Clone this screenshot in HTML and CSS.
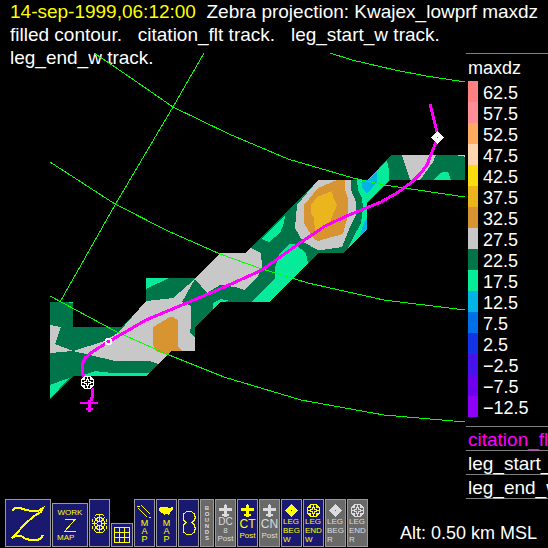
FILE: index.html
```
<!DOCTYPE html>
<html lang="en">
<head>
<meta charset="utf-8">
<meta name="viewport" content="width=device-width,initial-scale=1.0">
<title>Zebra - Kwajex_lowprf maxdz</title>
<link rel="stylesheet" href="styles.css">
</head>
<body>
<!-- shared icon shapes -->
<svg class="defs" aria-hidden="true">
    <symbol id="plane" viewBox="0 0 13 13"><path fill="currentColor" d="M5 1h1V0h1v1h1v3h5v3H8v3h2v2H8v1H5v-1H3v-2h2V7H0V4h5z"/></symbol>
    <symbol id="diamond" viewBox="0 0 13 13"><path fill="currentColor" fill-rule="evenodd" d="M6 0h1v1h1v1h1v1h1v1h1v1h1v1h1v1h-1v1h-1v1h-1v1H9v1H8v1H7v1H6v-1H5v-1H4v-1H3V9H2V8H1V7H0V6h1V5h1V4h1V3h1V2h1V1h1zM6 6v1h1V6z"/></symbol>
    <symbol id="wheel" viewBox="0 0 13 13"><path fill="none" stroke="currentColor" d="M3 .5h7M2 1.500h2M6 1.500h1M9 1.500h2M1 2.500h3M6 2.500h1M9 2.500h3M0 3.500h4M5 3.500h3M9 3.500h4M0 4.500h1M5 4.500h1M7 4.500h1M12 4.500h1M0 5.500h1M3 5.500h3M7 5.500h3M12 5.500h1M0 6.500h4M9 6.500h4M0 7.500h1M3 7.500h3M7 7.500h3M12 7.500h1M0 8.500h1M5 8.500h1M7 8.500h1M12 8.500h1M0 9.500h4M5 9.500h3M9 9.500h4M1 10.500h3M6 10.500h1M9 10.500h3M2 11.500h2M6 11.500h1M9 11.500h2M3 12.500h7"/></symbol>
</svg>

<header class="title">
    <time class="date">14-sep-1999,06:12:00</time>&nbsp; Zebra projection: Kwajex_lowprf maxdz filled contour.&nbsp;&nbsp; citation_flt track.&nbsp;&nbsp; leg_start_w track.&nbsp;&nbsp; leg_end_w track.
</header>

<main class="display">
    <svg class="map" viewBox="0 53 466 373" role="img" aria-label="maxdz filled contour with citation_flt track">
        <g shape-rendering="crispEdges">
            <!-- 22.5 -->
            <path fill="#00754a" d="M50 302H73V327H122L146 302V278H195L220 253H245L318 180H368L391 155H465V180H390L367 203V229L343 253H318L270 302H221L195 327V351H171L147 376H73L50 399z"/>
            <!-- 17.5 -->
            <g fill="#05eb99">
                <path d="M357 180H368L387 160 389 170V180L367 203V229L348 248 353 238 361 223 363 208 362 198 358 190z"/>
                <path d="M434 180L438 175 443 172H448L451 180z"/>
                <path d="M262 238L285 215 284 223 280 233 269 242 262 239z"/>
                <path d="M252 302L275 278V267L280 253 290 244H295L306 253 308 263 270 302z"/>
                <path d="M213 309V303L221 299 230 301 221 302z"/>
                <path d="M146 278H169L146 289zM50 385L69 378 50 399z"/>
                <path d="M81 376L95 371 112 373H149L147 376zM69 302H73V303H69z"/>
            </g>
            <!-- 12.5 -->
            <path fill="#00b4e6" d="M362 180H368L377 172V182L367 194 362 187zM367 218V229L360 236 363 225z"/>
            <!-- 27.5 -->
            <g fill="#c8c8c8">
                <path d="M50 325L61 327 55 344 73 351 102 342 118 333 146 301 173 298 195 279 182 302 191 306V325L190 333 195 338V351H171L158 364 149 361H115L90 355 73 351 50 353z"/>
                <path d="M195 279L220 253H245L251 248 261 253 262 267 257 278 244 290 235 287 220 285 207 293z"/>
                <path d="M318 180H351V190L356 202V215L350 227 342 247 322 250H318L303 242 295 228 297 205z"/>
                <path d="M402 155H436L433 162 420 180H410zM458 155H465V157H464V156H458z"/>
            </g>
            <!-- 32.5 and 37.5 -->
            <path fill="#d79430" d="M318 188L337 180H345V190L348 198V215L343 234 318 241 313 238 304 223V205zM153 327L170 317H173L178 320V347L182 351H171L167 355 156 351 153 345z"/>
            <path fill="#ebb51e" d="M332 191L333 197 337 205 330 222 325 229 315 232 314 218 311 213V205L317 197z"/>
        </g>

        <g class="grid-lines">
            <path d="M330 53L352 60 395 70 426 76 465 82"/>
            <path d="M94 53L115 67 173 107 229 134 288 159 353 178 384 185 465 197"/>
            <path d="M50 162L115 204 168 231 220 254 259 268 308 283 384 300 465 310"/>
            <path d="M50 296L115 331 164 353 224 377 301 400 384 415 465 422"/>
            <path d="M204 53L173 107 115 205 60 302"/>
        </g>

        <path class="track" d="M430 104L434 120 437 132V140L432 152 427 165 420 174 412 182 397 193 381 202 349 215 325 226 297 245 262 270 220 289 182 305 146 320 108 342 92 352 85 358 82 365 82 373 87 382 92 388 93 394 91 401"/>
        <g shape-rendering="crispEdges">
            <path fill="#f0f" d="M80 402h8v-2h3v2h7v2h-7v4h2v2h-2v2h-3v-2h-2v-2h2v-4h-8z"/>
            <circle class="marker" cx="108.500" cy="341.500" r="3"/>
        </g>
        <g color="#fff" shape-rendering="crispEdges">
            <use href="#diamond" x="431" y="131" width="13" height="13"/>
            <path d="M84 376h7l3 3v7l-3 3h-7l-3-3v-7z"/>
            <use href="#wheel" x="81" y="376" width="13" height="13"/>
        </g>
        <path fill="#f0f" d="M437 137h1v1h-1z"/>
    </svg>

    <aside class="side">
        <section class="legend">
            <h2>maxdz</h2>
            <ul>
                <li class="c1">62.5</li>
                <li class="c2">57.5</li>
                <li class="c3">52.5</li>
                <li class="c4">47.5</li>
                <li class="c5">42.5</li>
                <li class="c6">37.5</li>
                <li class="c7">32.5</li>
                <li class="c8">27.5</li>
                <li class="c9">22.5</li>
                <li class="c10">17.5</li>
                <li class="c11">12.5</li>
                <li class="c12">7.5</li>
                <li class="c13">2.5</li>
                <li class="c14">−2.5</li>
                <li class="c15">−7.5</li>
                <li class="c16">−12.5</li>
            </ul>
        </section>
        <ul class="tracks">
            <li class="on">citation_flt</li>
            <li>leg_start_w</li>
            <li>leg_end_w</li>
        </ul>
    </aside>
</main>

<footer class="bottom">
    <nav class="toolbar" aria-label="Icons">
        <button class="btn zebra" type="button" aria-label="Zebra">
            <svg width="44" height="46" viewBox="1 1 44 46"><path class="line thick" d="M7 12L10 9H15L21 11 27 12H33L38 9 36 13 29 17 19 26 12 34 7 39 11 37H16L21 40 26 41H33L36 39 38 36"/></svg>
        </button>
        <button class="btn work" type="button">
            <span>WORK</span>
            <svg width="12" height="13" viewBox="0 0 12 13"><path class="line" d="M1 .5h10L.5 12.500h11"/></svg>
            <span class="start">MAP</span>
        </button>
        <button class="btn mid" type="button" aria-label="Radar">
            <svg width="15" height="19" viewBox="0 0 15 19"><g class="line"><path d="M4.500.5h6M2.500 2.500l2-2M12.500 2.500l-2-2M.5 4.500v3M14.500 4.500v3M.5 11.500v3M14.500 11.500v3M2.500 16.500l2 2h6l2-2"/><ellipse cx="7.500" cy="9.500" rx="5" ry="6"/><circle cx="7.500" cy="9.500" r="2.500"/><path d="M7.500 1v6M7.500 12v6M0 9.500h5M10 9.500h5M2 3l4 4.500M13 3L9 7.500M2 16l4-4.500M13 16l-4-4.500"/></g></svg>
        </button>
        <button class="btn small" type="button" aria-label="Grid">
            <svg width="16" height="16" viewBox="0 0 16 16"><path class="line" d="M.5.5h15v15H.5zM5.500 0v16M10.500 0v16M0 5.500h16M0 10.500h16"/></svg>
        </button>
        <button class="btn" type="button">
            <svg width="15" height="15" viewBox="0 0 15 15"><path class="line" stroke-dasharray="5 1" d="M4 1l9 9M1 4l9 9"/><path class="line" d="M0 2h3M12 13h2"/></svg>
            <span class="stack">M<br>A<br>P</span>
        </button>
        <button class="btn" type="button">
            <svg width="15" height="15" viewBox="0 0 15 15"><path fill="currentColor" d="M1 3h7l1 1h2l2-1h1v2l-2 2-1 2-1 1v1H9v-1H6l-1 1-2-2-2-1-1-3z"/></svg>
            <span class="stack">M<br>A<br>P</span>
        </button>
        <button class="btn mid" type="button" aria-label="Outline">
            <svg width="14" height="24" viewBox="0 0 14 24"><path class="line" d="M5 .5h4l3 2 1 3v2l-1 2-2 2 2 2 1 3v2l-1 3-3 2H5l-3-2-1-3v-2l1-3 2-2-2-2-1-2v-2l1-3z"/></svg>
        </button>
        <button class="btn gray bounds mid" type="button">
            <span>B<br>O<br>U<br>N<br>D<br>S</span>
        </button>
        <button class="btn gray" type="button">
            <svg width="13" height="13"><use href="#plane"/></svg>
            <span class="dc">DC</span><span class="post">8<br>Post</span>
        </button>
        <button class="btn" type="button">
            <svg width="13" height="13"><use href="#plane"/></svg>
            <span class="call">CT</span><span class="post">Post</span>
        </button>
        <button class="btn gray" type="button">
            <svg width="13" height="13"><use href="#plane"/></svg>
            <span class="call">CN</span><span class="post">Post</span>
        </button>
        <button class="btn leg" type="button">
            <svg width="13" height="13"><use href="#diamond"/></svg>
            <span>LEG<br>BEG<br>W</span>
        </button>
        <button class="btn leg" type="button">
            <svg width="13" height="13"><use href="#wheel"/></svg>
            <span>LEG<br>END<br>W</span>
        </button>
        <button class="btn gray leg" type="button">
            <svg width="13" height="13"><use href="#diamond"/></svg>
            <span>LEG<br>BEG<br>R</span>
        </button>
        <button class="btn gray leg" type="button">
            <svg width="13" height="13"><use href="#wheel"/></svg>
            <span>LEG<br>END<br>R</span>
        </button>
    </nav>
    <p class="alt">Alt: 0.50 km MSL</p>
</footer>
</body>
</html>
```

FILE: styles.css
```
*{margin:0;padding:0;box-sizing:border-box;}
ul{list-style:none;}

body{
    display:flex;flex-direction:column;
    min-height:100vh;
    background:#000;color:#fff;
    font-family:"Liberation Sans",Arial,sans-serif;
    font-size:18px;}

.defs{display:none;}

/* title */
.title{
    padding:0 4px 0 10px;
    font-size:19px;line-height:23px;}

.date{color:#ff0;}

/* map + legend, the map runs up under the last title line */
.display{
    display:grid;
    grid-template-columns:minmax(0,1fr) 82px;
    align-items:start;
    margin-top:-16px;}

.map{display:block;width:100%;}

.grid-lines path{
    fill:none;stroke:#0f0;stroke-width:1;
    shape-rendering:crispEdges;}

.track{
    fill:none;stroke:#f0f;stroke-width:3;
    shape-rendering:crispEdges;}

.marker{fill:#f0f;stroke:#fff;stroke-width:2;}

/* side */
.side{overflow:hidden;white-space:nowrap;}

.legend{
    height:373px;
    padding-left:2px;
    border-top:1px solid #808080;}

.legend h2{
    height:27px;
    padding-top:2px;
    font-size:18px;font-weight:400;line-height:24px;}

.legend li{
    height:21px;
    padding-left:5px;
    border-left:10px solid;
    line-height:24px;}

.legend .c1{border-color:#ff8080;}
.legend .c2{border-color:#ff8e96;}
.legend .c3{border-color:#ffac62;}
.legend .c4{border-color:#ffd6b0;}
.legend .c5{border-color:#fadc0f;}
.legend .c6{border-color:#ebb51e;}
.legend .c7{border-color:#d79430;}
.legend .c8{border-color:#c8c8c8;}
.legend .c9{border-color:#00754a;}
.legend .c10{border-color:#05eb99;}
.legend .c11{border-color:#00b4e6;}
.legend .c12{border-color:#0070e8;}
.legend .c13{border-color:#1234e6;}
.legend .c14{border-color:#4614eb;}
.legend .c15{border-color:#6e00f0;}
.legend .c16{border-color:#8c00fa;}

.tracks{border-bottom:1px solid #808080;}

.tracks li{
    height:24px;
    padding-left:2px;
    border-top:1px solid #808080;
    font-size:19px;line-height:25px;}

.tracks .on{color:#f0f;}

/* bottom */
.bottom{
    display:flex;
    justify-content:space-between;align-items:flex-end;
    margin-top:auto;
    padding:0 11px 2px 5px;}

.toolbar{
    display:flex;
    align-items:flex-end;
    gap:1px;}

.btn{
    display:flex;flex-direction:column;
    align-items:center;
    overflow:hidden;
    width:21px;height:48px;
    padding-top:4px;
    background:#191970;
    border:1px solid #999;
    color:#ff0;
    font-family:inherit;font-size:8px;line-height:8px;
    text-align:center;}

.btn svg{
    flex:none;
    display:block;
    shape-rendering:crispEdges;}

.line{fill:none;stroke:currentColor;stroke-width:1;}
.thick{stroke-width:2;}

.gray{background:#696969;color:#dcdcdc;}
.mid{justify-content:center;padding:0;}
.zebra{width:46px;padding:0;}

.work{
    gap:2px;
    width:36px;height:44px;
    padding:5px 4px 0;}
.start{align-self:flex-start;}

.small{
    justify-content:center;
    width:22px;height:24px;
    padding:0;}

.stack{font-size:9px;}
.bounds{width:14px;font-size:6px;font-weight:700;line-height:6px;}

.dc{font-size:10px;line-height:10px;}
.post{line-height:8px;}
.call{font-size:12px;line-height:15px;}

.leg span{
    align-self:flex-start;
    padding:0 0 0 1px;
    line-height:9px;
    text-align:left;}

.alt{line-height:28px;}
```
